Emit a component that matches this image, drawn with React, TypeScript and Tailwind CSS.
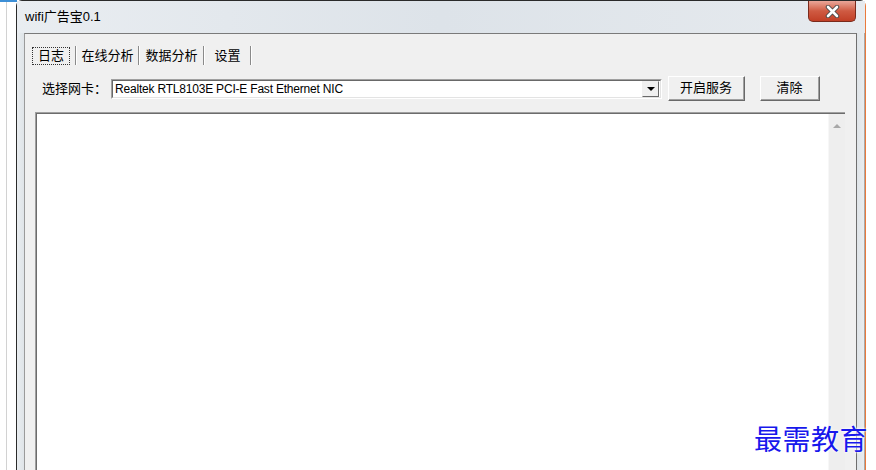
const FONT = "font-['Liberation_Sans','Noto_Sans_CJK_SC',sans-serif]";

const TABS = [
  { label: "日志", w: "w-[48px]" },
  { label: "在线分析", w: "w-[61px]" },
  { label: "数据分析", w: "w-[63px]" },
  { label: "设置", w: "w-[45px]" },
];

function Button({ label, w }: { label: string; w: string }) {
  return (
    <div className={`${w} h-[25px] border border-t-white border-l-white border-r-[#696969] border-b-[#696969] bg-[#f0f0f0]`}>
      <div className="h-full flex items-center justify-center border-r border-b border-[#a0a0a0] border-t-transparent border-l-transparent text-[13px] text-black">
        {label}
      </div>
    </div>
  );
}

function Combo() {
  return (
    <div className="w-[551px] h-[20px] border border-t-[#a0a0a0] border-l-[#a0a0a0] border-r-white border-b-white">
      <div className="h-full flex items-center bg-white border border-t-[#696969] border-l-[#696969] border-r-[#e3e3e3] border-b-[#e3e3e3]">
        <span className="pl-[2px] text-[12px] leading-none text-black font-['Liberation_Sans',sans-serif] tracking-[-0.2px]">
          Realtek RTL8103E PCI-E Fast Ethernet NIC
        </span>
        <div className="ml-auto w-[17px] h-[16px] mr-px bg-[#f0f0f0] border border-t-[#f0f0f0] border-l-[#f0f0f0] border-r-[#696969] border-b-[#696969] flex items-center justify-center">
          <div className="w-0 h-0 border-l-[4px] border-r-[4px] border-t-[4px] border-l-transparent border-r-transparent border-t-black" />
        </div>
      </div>
    </div>
  );
}

function CloseButton() {
  return (
    <div className="w-[48px] h-[21px] rounded-b-[5px] border border-t-0 border-[#7a2a1c] bg-gradient-to-b from-[#e9a699] via-[#cf5a42] to-[#c13f26] flex items-center justify-center">
      <svg width="15" height="13" viewBox="0 0 15 13">
        <path d="M3 2 L12 11 M12 2 L3 11" stroke="#4a4a4a" strokeWidth="4.5" strokeLinecap="round" />
        <path d="M3 2 L12 11 M12 2 L3 11" stroke="#ffffff" strokeWidth="2.6" strokeLinecap="round" />
      </svg>
    </div>
  );
}

export default function App() {
  return (
    <div className={`relative w-[876px] h-[470px] overflow-hidden bg-white flex ${FONT}`}>
      <div className="absolute left-0 top-0 w-[17px] h-[2px] bg-[#3d8fd6]" />
      <div className="w-[6px] shrink-0" />
      <div className="w-px shrink-0 bg-[#d2d2d2]" />
      <div className="w-[9px] shrink-0" />

      {/* window */}
      <div className="w-[850px] shrink-0 h-[520px] flex flex-col rounded-tl-[6px] rounded-tr-[6px] border-t border-l border-t-[#2a2a2a] border-l-[#2a2a2a] border-r border-r-[#ea7a3c] bg-[#e3e8ed]">
        {/* title bar */}
        <div className="h-[32px] flex items-start bg-gradient-to-r from-[#e9edf1] via-[#dde3e9] to-[#e6eaee]">
          <div className="pl-[8px] pt-[7px] text-[13px] leading-[18px] text-black">wifi广告宝0.1</div>
          <div className="ml-auto mr-[9px]">
            <CloseButton />
          </div>
        </div>

        <div className="flex flex-1">
          <div className="w-[7px] bg-gradient-to-r from-[#e9edf0] to-[#dfe4e8]" />
          {/* client */}
          <div className="w-[833px] flex flex-col border-t border-l border-r border-t-[#7a7a7a] border-l-[#9a9a9a] border-r-[#6e6e6e] bg-[#f0f0f0] text-[13px] text-black">
            {/* tabs */}
            <div className="flex items-center pt-[10px] pl-[2px] h-[33px]">
              {TABS.map((t, i) => (
                <div key={t.label} className="flex items-center">
                  <div className={`${t.w} h-[22px] flex items-center justify-center`}>
                    {i === 0 ? (
                      <span className="px-[5px] h-[18px] leading-[16px] border border-dotted border-[#333]">{t.label}</span>
                    ) : (
                      <span>{t.label}</span>
                    )}
                  </div>
                  <div className="w-px h-[19px] bg-[#8a8a8a]" />
                  <div className="w-px h-[19px] bg-white" />
                </div>
              ))}
            </div>

            {/* adapter row */}
            <div className="flex items-center mt-[9px] h-[25px] pl-[17px]">
              <span className="w-[69px]">选择网卡：</span>
              <Combo />
              <div className="ml-[6px]">
                <Button label="开启服务" w="w-[77px]" />
              </div>
              <div className="ml-[15px]">
                <Button label="清除" w="w-[60px]" />
              </div>
            </div>

            {/* log area */}
            <div className="mt-[11px] ml-[10px] mr-[11px] flex-1 border-t border-l border-t-[#a0a0a0] border-l-[#a0a0a0]">
              <div className="h-full flex bg-white border-t border-l border-t-[#6c6c6c] border-l-[#6c6c6c]">
                <div className="flex-1" />
                <div className="w-[17px] bg-[#eeeeee] border-l border-l-[#f7f7f7] flex justify-center pt-[10px]">
                  <div className="w-0 h-0 border-l-[4px] border-r-[4px] border-b-[4px] border-l-transparent border-r-transparent border-b-[#a8a8a8]" />
                </div>
              </div>
            </div>
          </div>
          <div className="w-[8px] bg-gradient-to-r from-[#dfe4e8] to-[#e9edf0] border-r border-r-[#a9a9a9]" />
        </div>
      </div>

      <div className="absolute left-[754px] top-[419px] text-[28px] leading-[38px] tracking-[0.5px] text-[#1818ec] font-['Noto_Sans_CJK_SC',sans-serif] [text-shadow:0_0_2px_#fff,0_0_3px_#fff]">
        最需教育
      </div>
    </div>
  );
}
